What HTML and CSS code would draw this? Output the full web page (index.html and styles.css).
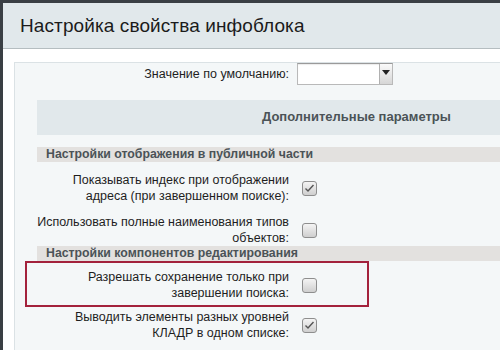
FILE: index.html
```html
<!DOCTYPE html>
<html lang="ru">
<head>
    <meta charset="UTF-8">
    <title>Настройка свойства инфоблока</title>
    <link rel="stylesheet" href="styles.css">
</head>
<body>
    <div class="dialog">
        <header class="dialog-head">
            <h1>Настройка свойства инфоблока</h1>
        </header>

        <div class="dialog-body">
            <div class="panel">
                <div class="field-row default-row">
                    <label class="field-label">Значение по умолчанию:</label>
                    <div class="select">
                        <span class="select-arrow">
                            <svg width="8" height="5" viewBox="0 0 8 5"><path d="M0 0h8L4 5z" fill="#222"/></svg>
                        </span>
                    </div>
                </div>

                <div class="params">
                    <div class="params-title">Дополнительные параметры</div>

                    <div class="group">
                        <div class="group-title">Настройки отображения в публичной части</div>
                        <div class="field-row">
                            <label class="field-label">Показывать индекс при отображении<br>адреса (при завершенном поиске):</label>
                            <span class="check checked">
                                <svg width="11" height="9" viewBox="0 0 11 9"><path d="M1.5 4.5l2.5 2.5 5.5-6" fill="none" stroke="#555" stroke-width="1.4"/></svg>
                            </span>
                        </div>
                        <div class="field-row">
                            <label class="field-label">Использовать полные наименования типов<br>объектов:</label>
                            <span class="check"></span>
                        </div>
                    </div>

                    <div class="group group-edit">
                        <div class="group-title">Настройки компонентов редактирования</div>
                        <div class="field-row marked">
                            <label class="field-label">Разрешать сохранение только при<br>завершении поиска:</label>
                            <span class="check"></span>
                        </div>
                        <div class="field-row">
                            <label class="field-label">Выводить элементы разных уровней<br>КЛАДР в одном списке:</label>
                            <span class="check checked">
                                <svg width="11" height="9" viewBox="0 0 11 9"><path d="M1.5 4.5l2.5 2.5 5.5-6" fill="none" stroke="#555" stroke-width="1.4"/></svg>
                            </span>
                        </div>
                    </div>
                </div>
            </div>
        </div>
    </div>
</body>
</html>
```

FILE: styles.css
```css
:root {
    --page-bg: #3a3f44;
    --head-bg: #e1e8eb;
    --head-border: #b5bdc0;
    --panel-bg: #f4f7f8;
    --panel-border: #dbe2e5;
    --group-bg: #e3e1df;
    --text-color: #1e1e1e;
    --muted-text: #4b5357;
    --mark-color: #a3223c;
}

html, body {
    height: 100%;
}

body {
    margin: 0;
    background-color: var(--page-bg);
    font-family: 'Liberation Sans', Arial, sans-serif;
    color: var(--text-color);
    overflow: hidden;
}

.dialog {
    margin: 3px 0 0 3px;
    height: 347px;
    background-color: #fff;
}

.dialog-head {
    height: 45px;
    background-color: var(--head-bg);
    border-bottom: 1px solid var(--head-border);
    display: flex;
    align-items: center;
}

h1 {
    margin: 0 0 0 17px;
    font-size: 19px;
    font-weight: normal;
    letter-spacing: 0.1px;
    color: #1b1b1b;
}

.dialog-body {
    padding: 13px 0 0 11px;
}

.panel {
    background-color: var(--panel-bg);
    border-left: 1px solid var(--panel-border);
    border-top: 1px solid var(--panel-border);
    height: 300px;
}

.field-row {
    display: grid;
    grid-template-columns: 262px 30px;
    column-gap: 13px;
    align-items: center;
    margin-left: -10px;
    font-size: 12.5px;
    line-height: 16px;
    padding: 10px 0 0;
}

.field-label {
    text-align: right;
}

.default-row {
    grid-template-columns: 274px 96px;
    column-gap: 8px;
    margin-left: 0;
    padding: 0;
}

.select {
    height: 20px;
    background-color: #fff;
    border: 1px solid #b9b9b9;
    border-top-color: #9a9a9a;
    display: flex;
    justify-content: flex-end;
    box-shadow: inset 0 1px 1px rgba(0,0,0,0.08);
}

.select-arrow {
    width: 13px;
    border-left: 1px solid #b0b0b0;
    background: linear-gradient(#fafafa, #d6d6d6);
    display: flex;
    justify-content: center;
    padding-top: 6px;
    box-sizing: border-box;
}

.params {
    margin: 15px 0 0 22px;
}

.params-title {
    background-color: var(--head-bg);
    height: 35px;
    line-height: 33px;
    padding-left: 225px;
    font-size: 13px;
    font-weight: bold;
    color: var(--muted-text);
    margin-bottom: 12px;
}

.group-title {
    background-color: var(--group-bg);
    height: 15px;
    line-height: 15px;
    padding-left: 9px;
    font-size: 12.3px;
    font-weight: bold;
    color: var(--muted-text);
}

.group-edit .field-row {
    padding-top: 8px;
}

.check {
    width: 13px;
    height: 13px;
    border: 1px solid #8e8e8e;
    border-radius: 3px;
    background: linear-gradient(#f4f4f4, #cfcfcf);
    display: flex;
    align-items: center;
    justify-content: center;
}

.marked {
    position: relative;
}

.marked::after {
    content: "";
    position: absolute;
    left: -2px;
    top: 0;
    width: 344px;
    height: 46px;
    box-sizing: border-box;
    border: 2px solid var(--mark-color);
}
```
